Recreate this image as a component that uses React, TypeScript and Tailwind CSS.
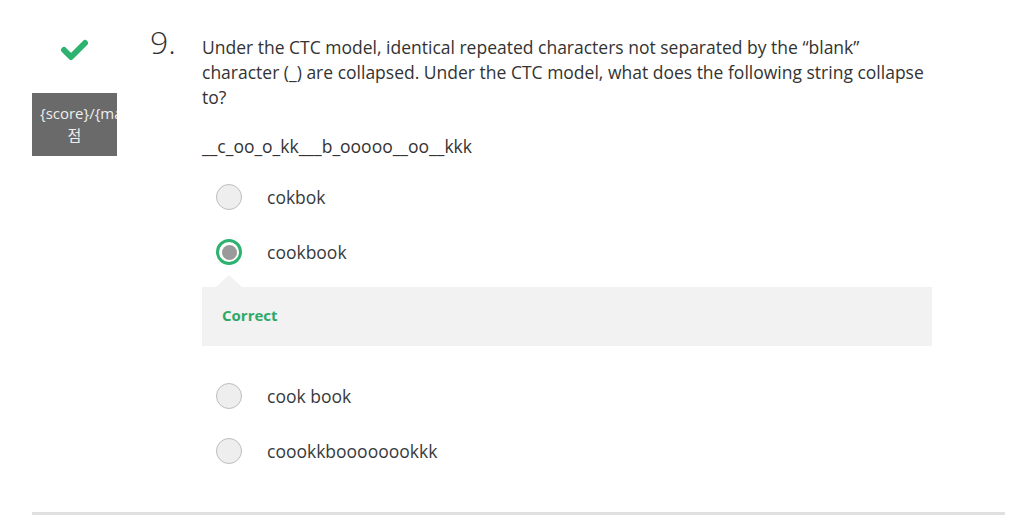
import React from "react";

function Radio({ selected }: { selected?: boolean }) {
  if (selected) {
    return (
      <div className="flex h-[26px] w-[26px] shrink-0 items-center justify-center rounded-full border-[3px] border-[#2db36f] bg-white">
        <div className="h-[15px] w-[15px] rounded-full bg-[#9a9a9a]" />
      </div>
    );
  }
  return <div className="h-[26px] w-[26px] shrink-0 rounded-full border border-[#bdbdbd] bg-[#eeeeee]" />;
}

function Option({ label, selected }: { label: string; selected?: boolean }) {
  return (
    <div className="flex items-center pl-[14px]">
      <Radio selected={selected} />
      <span className="ml-[25px] text-[17.5px] leading-[26px] text-[#373a3c]">{label}</span>
    </div>
  );
}

export default function App() {
  return (
    <div
      className="relative h-[528px] w-[1015px] overflow-hidden bg-white"
      style={{ fontFamily: '"Open Sans", "Noto Sans CJK KR", sans-serif' }}
    >
      <div className="flex pl-[32px] pt-[26px]">
        {/* Left column */}
        <div className="flex w-[85px] shrink-0 flex-col items-center">
          <svg width="29" height="23" viewBox="0 0 29 23" className="mt-[13px]">
            <path
              d="M4 11 L11 18 L25 4"
              fill="none"
              stroke="#2db36f"
              strokeWidth="6"
              strokeLinecap="round"
              strokeLinejoin="round"
            />
          </svg>
          <div className="mt-[31px] h-[63px] w-[85px] overflow-hidden bg-[#6a6a6a] px-2 pt-[9px] text-center text-[15px] leading-[22px] text-[#eeeeee]">
            {"{score}/{max_score}"} 점
          </div>
        </div>

        {/* Number */}
        <div className="ml-[33px] w-[52px] shrink-0 text-[32px] font-light leading-[32px] text-[#333333]">
          9.
        </div>

        {/* Content */}
        <div className="w-[730px] pt-[9px]">
          <p className="text-[17.5px] leading-[25px] text-[#333333]">
            Under the CTC model, identical repeated characters not separated by the “blank” character (_) are
            collapsed. Under the CTC model, what does the following string collapse to?
          </p>
          <p className="mt-[24px] text-[17.5px] leading-[25px] text-[#333333]">__c_oo_o_kk___b_ooooo__oo__kkk</p>

          <div className="mt-[25px] flex flex-col">
            <Option label="cokbok" />
            <div className="mt-[29px]">
              <Option label="cookbook" selected />
            </div>
            <div className="relative mt-[22px] h-[59px] bg-[#f2f2f2] pl-[20px] pt-[16px]">
              <div className="absolute left-[14px] top-[-12px] h-0 w-0 border-b-[12px] border-l-[13px] border-r-[13px] border-b-[#f2f2f2] border-l-transparent border-r-transparent" />
              <span className="text-[15px] font-bold leading-[20px] text-[#2fa866]">Correct</span>
            </div>
            <div className="mt-[37px]">
              <Option label="cook book" />
            </div>
            <div className="mt-[29px]">
              <Option label="coookkboooooookkk" />
            </div>
          </div>
        </div>
      </div>

      <div className="absolute left-[32px] top-[512px] h-[3px] w-[973px] bg-[#e0e0e0]" />
    </div>
  );
}
